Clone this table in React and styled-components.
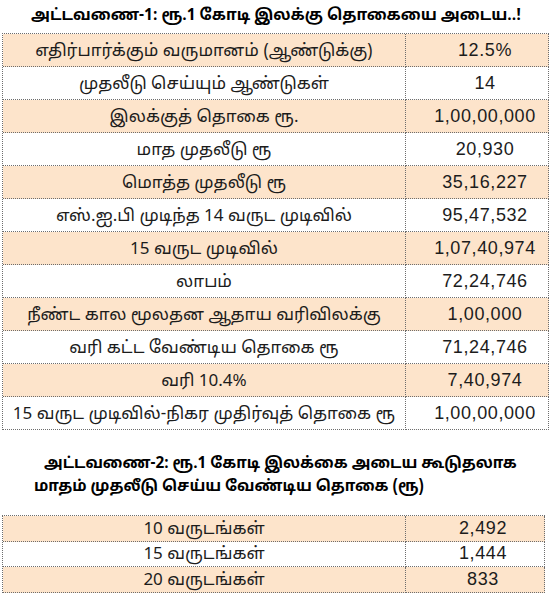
import React from "react";
import styled, { createGlobalStyle } from "styled-components";

const Global = createGlobalStyle`
  html, body { margin: 0; padding: 0; background: #fff; }
  body { font-family: "Noto Sans Tamil", "Latha", "Liberation Sans", "Noto Sans", sans-serif; color: #1a1a1a; }
`;

const Page = styled.div`
  width: 550px;
  padding: 0 2px;
  box-sizing: border-box;
`;

const Title = styled.h1`
  margin: 0;
  height: 33px;
  display: flex;
  align-items: center;
  justify-content: center;
  padding-left: 2px;
  font-size: 15.5px;
  font-weight: 700;
  color: #000;
  white-space: nowrap;
`;

const SubTitle = styled.h2`
  margin: 23px 0 0;
  padding-left: 32px;
  font-size: 15.3px;
  font-weight: 700;
  line-height: 23px;
  color: #000;
  white-space: nowrap;
`;

const Line = styled.span`
  display: block;
  padding-left: ${(p) => p.$indent || 0}px;
`;

const Table = styled.div`
  display: grid;
  grid-template-columns: 403px 1fr;
  width: ${(p) => p.$width}px;
  margin-top: ${(p) => p.$top || 0}px;
  border-top: 1px dotted #6d6d6d;
  border-left: 1px dotted #6d6d6d;
`;

const Cell = styled.div`
  height: ${(p) => p.$h}px;
  box-sizing: border-box;
  display: flex;
  align-items: center;
  justify-content: center;
  padding-top: 2px;
  background: ${(p) => (p.$shade ? "#fde4cb" : "#ffffff")};
  border-right: 1px dotted #6d6d6d;
  border-bottom: 1px dotted #6d6d6d;
  font-size: ${(p) => p.$fs}px;
  white-space: nowrap;
  color: #1c1c1c;
`;

const Value = styled(Cell)`
  padding-top: 0;
  font-family: "Liberation Sans", Arial, sans-serif;
  letter-spacing: 0.6px;
  padding-left: ${(p) => p.$pl || 0}px;
`;

const rows1 = [
  ["எதிர்பார்க்கும் வருமானம் (ஆண்டுக்கு)", "12.5%"],
  ["முதலீடு செய்யும் ஆண்டுகள்", "14"],
  ["இலக்குத் தொகை ரூ.", "1,00,00,000"],
  ["மாத முதலீடு ரூ", "20,930"],
  ["மொத்த முதலீடு ரூ", "35,16,227"],
  ["எஸ்.ஐ.பி முடிந்த 14 வருட முடிவில்", "95,47,532"],
  ["15 வருட முடிவில்", "1,07,40,974"],
  ["லாபம்", "72,24,746"],
  ["நீண்ட கால மூலதன ஆதாய வரிவிலக்கு", "1,00,000"],
  ["வரி கட்ட வேண்டிய தொகை ரூ", "71,24,746"],
  ["வரி 10.4%", "7,40,974"],
  ["15 வருட முடிவில்-நிகர முதிர்வுத் தொகை ரூ", "1,00,00,000"],
];

const rows2 = [
  ["10 வருடங்கள்", "2,492"],
  ["15 வருடங்கள்", "1,444"],
  ["20 வருடங்கள்", "833"],
];

export default function App() {
  return (
    <Page>
      <Global />
      <Title>அட்டவணை-1: ரூ.1 கோடி இலக்கு தொகையை அடைய..!</Title>
      <Table $width={546}>
        {rows1.map(([l, v], i) => (
          <React.Fragment key={i}>
            <Cell $h={33} $fs={17} $shade={i % 2 === 0}>{l}</Cell>
            <Value $h={33} $fs={18} $pl={16} $shade={i % 2 === 0}>{v}</Value>
          </React.Fragment>
        ))}
      </Table>
      <SubTitle>
        <Line $indent={10}>அட்டவணை-2: ரூ.1 கோடி இலக்கை அடைய கூடுதலாக</Line>
        <Line>மாதம் முதலீடு செய்ய வேண்டிய தொகை (ரூ)</Line>
      </SubTitle>
      <Table $width={542} $top={16}>
        {rows2.map(([l, v], i) => (
          <React.Fragment key={i}>
            <Cell $h={25.5} $fs={17} $shade={i % 2 === 0}>{l}</Cell>
            <Value $h={25.5} $fs={18} $pl={16} $shade={i % 2 === 0}>{v}</Value>
          </React.Fragment>
        ))}
      </Table>
    </Page>
  );
}
